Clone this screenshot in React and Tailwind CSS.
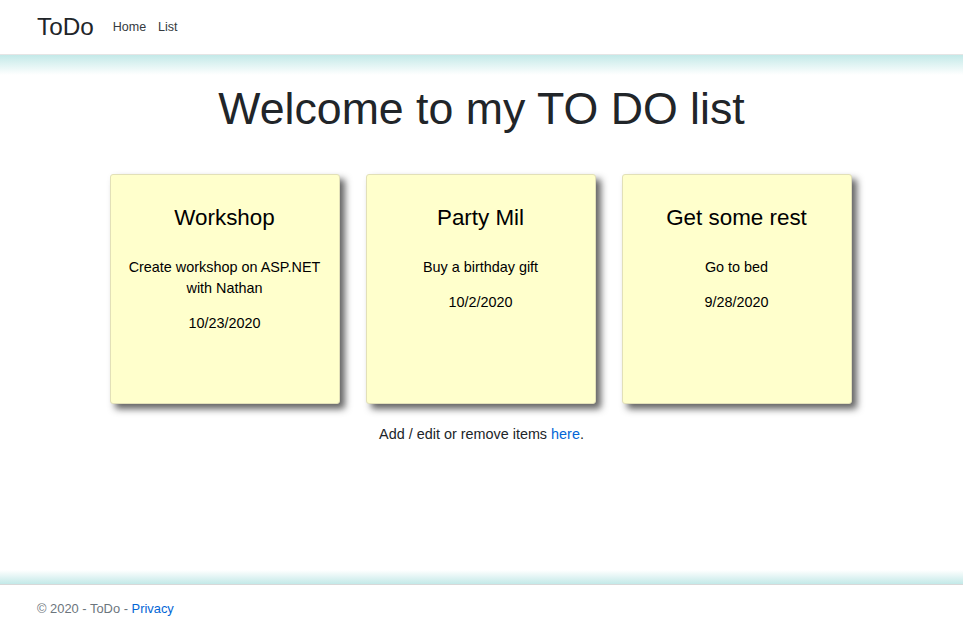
import React from "react";

const notes = [
  { title: "Workshop", text: "Create workshop on ASP.NET with Nathan", date: "10/23/2020" },
  { title: "Party Mil", text: "Buy a birthday gift", date: "10/2/2020" },
  { title: "Get some rest", text: "Go to bed", date: "9/28/2020" },
];

export default function App() {
  return (
    <div
      className="min-h-screen flex flex-col bg-white text-[#212529]"
      style={{ fontFamily: '"Liberation Sans", Arial, sans-serif' }}
    >
      <header className="bg-white">
        <nav className="h-[55px] flex items-center px-[37px] border-b border-[#e5e5e5]">
          <span className="text-[24.3px] leading-none text-[#212529] mr-[19px]">ToDo</span>
          <a className="text-[12.5px] text-[#343a40] mr-[12px]">Home</a>
          <a className="text-[12.5px] text-[#343a40]">List</a>
        </nav>
        <div className="h-[20px] bg-gradient-to-b from-[#c3e9e8] to-white"></div>
      </header>

      <main className="flex flex-col items-center">
        <h1 className="text-[44.7px] leading-[54px] text-[#212529] mt-[7px] font-normal">
          Welcome to my TO DO list
        </h1>
        <div className="flex gap-[26px] mt-[38px] -ml-[2px]">
          {notes.map((n) => (
            <div
              key={n.title}
              className="w-[230px] h-[230px] bg-[#ffffcc] border border-[#e2e0b8] rounded-[3px] shadow-[5px_5px_7px_rgba(33,33,33,0.7)] flex flex-col items-center text-center px-[14px] pt-[30px] text-black"
            >
              <h2 className="text-[22.4px] leading-[26px] mb-[26px]">{n.title}</h2>
              <p className="text-[14.4px] leading-[21px] mb-[14px]">{n.text}</p>
              <p className="text-[14.4px] leading-[21px]">{n.date}</p>
            </div>
          ))}
        </div>
        <p className="text-[14.4px] leading-[22px] mt-[19px]">
          Add / edit or remove items <a className="text-[#0366d6]">here</a>.
        </p>
      </main>

      <footer className="mt-auto">
        <div className="h-[14px] bg-gradient-to-b from-white to-[#c3e9e8]"></div>
        <div className="h-[44px] border-t border-[#d8d8d8] px-[37px] pt-[15px] text-[12.9px] leading-[18px] text-[#6c757d]">
          © 2020 - ToDo - <a className="text-[#0366d6]">Privacy</a>
        </div>
      </footer>
    </div>
  );
}
